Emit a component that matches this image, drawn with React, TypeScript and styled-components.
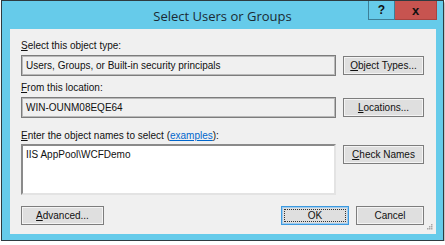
import React, { FC } from 'react';
import styled, { createGlobalStyle } from 'styled-components';

const GlobalStyle = createGlobalStyle`
  html, body {
    margin: 0;
    padding: 0;
    background: #ffffff;
  }
  body {
    font-family: "Liberation Sans", Arial, sans-serif;
  }
`;

const Window = styled.div`
  position: relative;
  width: 443px;
  margin-left: 1px;
  box-sizing: border-box;
  border: 1px solid #2e3b40;
  background: #66cbea;
  box-shadow: 1px 2px 2px rgba(0, 0, 0, 0.35);
  padding: 0 7px 6px 8px;
`;

const TitleBar = styled.div`
  height: 28px;
  display: grid;
  grid-template-columns: 1fr auto 1fr;
  align-items: start;
  margin: 0 -7px 0 -8px;
`;

const Title = styled.div`
  grid-column: 2;
  padding-top: 6px;
  font-family: "Open Sans", "Segoe UI", sans-serif;
  font-size: 13px;
  line-height: 18px;
  color: #1b2a33;
`;

const Controls = styled.div`
  grid-column: 3;
  justify-self: end;
  display: flex;
  margin-right: 6px;
`;

const CaptionButton = styled.div<{ $close?: boolean }>`
  width: ${p => (p.$close ? '42px' : '27px')};
  height: 19px;
  box-sizing: border-box;
  display: flex;
  align-items: center;
  justify-content: center;
  font-family: "Liberation Sans", Arial, sans-serif;
  font-weight: bold;
  font-size: ${p => (p.$close ? '13px' : '12px')};
  color: #111;
  background: ${p => (p.$close ? '#c75450' : '#66cbea')};
  border: 1px solid ${p => (p.$close ? '#a74440' : '#3d7f97')};
  border-top: none;
  border-left-width: ${p => (p.$close ? '0' : '1px')};
`;

const Client = styled.div`
  position: relative;
  background: #f0f0f0;
  padding: 10px 12px 9px 11px;
  font-size: 10px;
  color: #111;
`;

const Section = styled.div<{ $gap?: number }>`
  margin-top: ${p => p.$gap ?? 0}px;
`;

const Label = styled.div<{ $below?: number }>`
  height: 14px;
  line-height: 14px;
  margin-bottom: ${p => p.$below ?? 2}px;
  white-space: nowrap;
`;

const Key = styled.span`
  text-decoration: underline;
`;

const Link = styled.span`
  color: #0066cc;
  text-decoration: underline;
`;

const Row = styled.div`
  display: flex;
  gap: 7px;
  align-items: flex-start;
`;

const Field = styled.div`
  flex: 1;
  height: 21px;
  box-sizing: border-box;
  border: 1px solid #7c7c7c;
  box-shadow: inset 0 0 0 1px #b9b9b9;
  background: #f0f0f0;
  padding: 0 4px;
  line-height: 19px;
  white-space: nowrap;
`;

const NamesBox = styled.div`
  flex: 1;
  height: 51px;
  box-sizing: border-box;
  border: 2px solid;
  border-color: #8a8a8a #e3e3e3 #e3e3e3 #8a8a8a;
  background: #ffffff;
  padding: 2px 3px;
  line-height: 14px;
`;

const Button = styled.div<{ $w?: number; $default?: boolean }>`
  width: ${p => p.$w ?? 81}px;
  height: 19px;
  margin-top: 1px;
  box-sizing: border-box;
  border: 1px solid ${p => (p.$default ? '#3c9ae0' : '#7d7d7d')};
  box-shadow: inset 0 0 0 1px ${p => (p.$default ? '#9fcbee' : '#f4f4f4')};
  background: #dfdfdf;
  display: flex;
  align-items: center;
  justify-content: center;
  position: relative;
  white-space: nowrap;
`;

const Focus = styled.div`
  position: absolute;
  inset: 2px;
  border: 1px dotted #333;
`;

const Footer = styled.div`
  margin-top: 10px;
  display: flex;
  gap: 7px;
  align-items: flex-start;
  & > :first-child {
    margin-right: auto;
  }
`;

const Grip = styled.svg`
  position: absolute;
  right: 3px;
  bottom: 3px;
`;

const SizeGrip: FC = () => (
  <Grip width="7" height="7" viewBox="0 0 7 7">
    {[
      [5, 0],
      [3, 2],
      [5, 2],
      [1, 4],
      [3, 4],
      [5, 4],
    ].map(([x, y]) => (
      <rect key={`${x}-${y}`} x={x} y={y} width="1.5" height="1.5" fill="#a8a8a8" />
    ))}
  </Grip>
);

const App: FC = () => (
  <>
    <GlobalStyle />
    <Window>
      <TitleBar>
        <Title>Select Users or Groups</Title>
        <Controls>
          <CaptionButton>?</CaptionButton>
          <CaptionButton $close>x</CaptionButton>
        </Controls>
      </TitleBar>
      <Client>
        <Section>
          <Label>
            <Key>S</Key>elect this object type:
          </Label>
          <Row>
            <Field>Users, Groups, or Built-in security principals</Field>
            <Button>
              <Key>O</Key>bject Types...
            </Button>
          </Row>
        </Section>
        <Section $gap={5}>
          <Label>
            <Key>F</Key>rom this location:
          </Label>
          <Row>
            <Field>WIN-OUNM08EQE64</Field>
            <Button>
              <Key>L</Key>ocations...
            </Button>
          </Row>
        </Section>
        <Section $gap={11}>
          <Label $below={1}>
            <Key>E</Key>nter the object names to select (<Link>examples</Link>):
          </Label>
          <Row>
            <NamesBox>IIS AppPool\WCFDemo</NamesBox>
            <Button>
              <Key>C</Key>heck Names
            </Button>
          </Row>
        </Section>
        <Footer>
          <Button $w={83}>
            <Key>A</Key>dvanced...
          </Button>
          <Button $w={68} $default>
            OK
            <Focus />
          </Button>
          <Button $w={68}>Cancel</Button>
        </Footer>
        <SizeGrip />
      </Client>
    </Window>
  </>
);

export default App;
